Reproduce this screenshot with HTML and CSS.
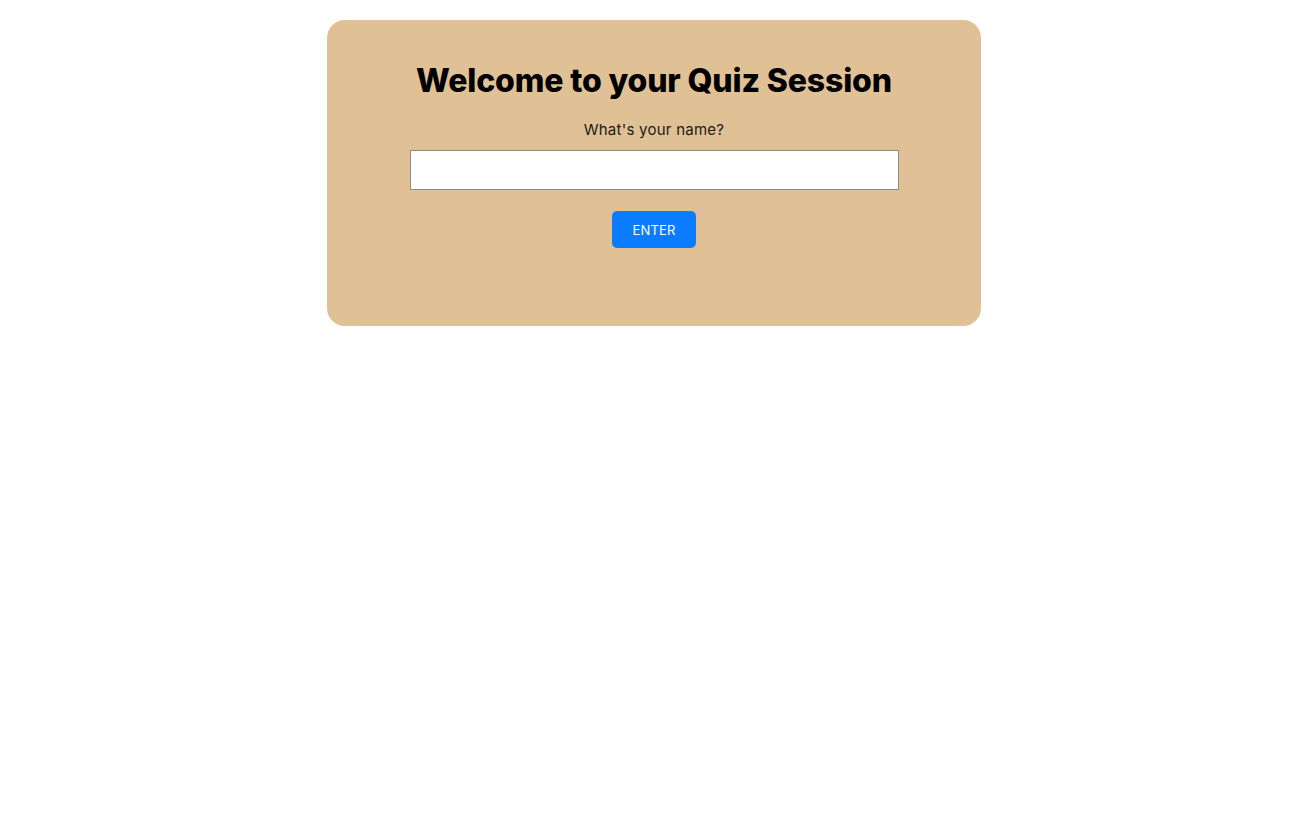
FILE: index.html
```html
<!DOCTYPE html>
<html lang="en">
<head>
<meta charset="utf-8">
<title>Quiz Session</title>
<link rel="stylesheet" href="styles.css">
</head>
<body>
<main class="card">
  <h1 class="title">Welcome to your Quiz Session</h1>
  <label class="label" for="name">What's your name?</label>
  <input class="name-input" id="name" type="text">
  <button class="enter-btn" type="button">ENTER</button>
</main>
</body>
</html>
```
FILE: styles.css
```css
html, body {
  margin: 0;
  padding: 0;
  background: #ffffff;
}
body {
  font-family: Inter, "Noto Sans", sans-serif;
  color: #111;
  padding-top: 20px;
}
.card {
  width: 654px;
  margin: 0 auto;
  box-sizing: border-box;
  height: 306px;
  background: #e0c195;
  border-radius: 18px;
  display: flex;
  flex-direction: column;
  align-items: center;
  padding-top: 41px;
}
.title {
  margin: 0;
  font-size: 32px;
  font-weight: 800;
  letter-spacing: -0.15px;
  color: #000;
  line-height: 39px;
}
.label {
  margin-top: 21px;
  font-size: 15px;
  letter-spacing: 0.25px;
  line-height: 18px;
  color: #1a1a1a;
}
.name-input {
  margin-top: 11px;
  width: 489px;
  height: 40px;
  box-sizing: border-box;
  border: 1px solid #8f8a84;
  background: #fff;
  padding: 0 8px;
  font-family: inherit;
  font-size: 15px;
}
.enter-btn {
  margin-top: 21px;
  width: 84px;
  height: 37px;
  border: none;
  border-radius: 5px;
  background: #0b7cff;
  color: #fff;
  font-family: inherit;
  font-size: 13px;
  letter-spacing: 0.2px;
}
```
